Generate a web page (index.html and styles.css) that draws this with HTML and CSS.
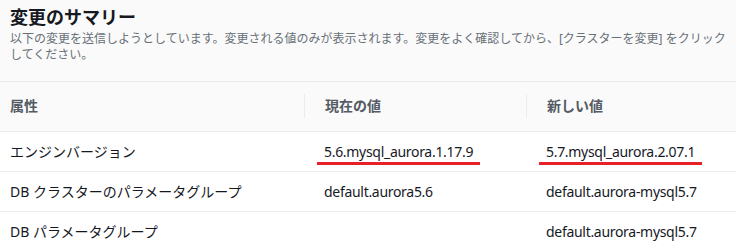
FILE: index.html
```html
<!DOCTYPE html>
<html lang="ja">
<head>
<meta charset="utf-8">
<link rel="stylesheet" href="styles.css">
</head>
<body>
<div class="summary">
  <div class="intro">
    <h2 class="title">変更のサマリー</h2>
    <p class="desc">以下の変更を送信しようとしています。変更される値のみが表示されます。変更をよく確認してから、[クラスターを変更] をクリックしてください。</p>
  </div>
  <table class="changes">
    <thead>
      <tr>
        <th class="c1"><div class="hcell first">属性</div></th>
        <th class="c2"><div class="hcell">現在の値</div></th>
        <th class="c3"><div class="hcell">新しい値</div></th>
      </tr>
    </thead>
    <tbody>
      <tr>
        <td class="c1">エンジンバージョン</td>
        <td class="c2"><span class="mark">5.6.mysql_aurora.1.17.9</span></td>
        <td class="c3"><span class="mark">5.7.mysql_aurora.2.07.1</span></td>
      </tr>
      <tr>
        <td class="c1">DB クラスターのパラメータグループ</td>
        <td class="c2">default.aurora5.6</td>
        <td class="c3">default.aurora-mysql5.7</td>
      </tr>
      <tr>
        <td class="c1">DB パラメータグループ</td>
        <td class="c2"></td>
        <td class="c3">default.aurora-mysql5.7</td>
      </tr>
    </tbody>
  </table>
</div>
</body>
</html>
```
FILE: styles.css
```css
html, body {
  margin: 0;
  padding: 0;
  background: #ffffff;
}
body {
  font-family: "Noto Sans", "Noto Sans CJK JP", sans-serif;
  color: #16191f;
}
.summary {
  width: 736px;
}
.intro {
  background: #fafafa;
  padding: 6px 10px 0 10px;
  height: 75px;
  border-bottom: 1px solid #eaeded;
}
.title {
  margin: 0;
  font-size: 18px;
  line-height: 22px;
  font-weight: 700;
  color: #16191f;
}
.desc {
  margin: 3px 0 0 0;
  font-size: 12px;
  line-height: 16px;
  color: #687078;
}
.changes {
  width: 736px;
  border-collapse: collapse;
  table-layout: fixed;
}
.c1 { width: 304px; }
.c2 { width: 222px; }
.c3 { width: 210px; }
th {
  background: #fafafa;
  padding: 12px 0 13px 0;
  text-align: left;
  font-size: 14px;
  font-weight: 700;
  color: #545b64;
  border-bottom: 1px solid #eaeded;
}
.hcell {
  height: 24px;
  line-height: 24px;
  padding-left: 20px;
  border-left: 1px solid #eaeded;
}
.hcell.first {
  padding-left: 10px;
  border-left: none;
}
td {
  height: 39px;
  padding: 0 0 0 20px;
  font-size: 14px;
  line-height: 20px;
  border-bottom: 1px solid #eaeded;
  vertical-align: middle;
}
td.c1 {
  padding-left: 10px;
}
td.c2, td.c3 {
  letter-spacing: -0.3px;
}
.mark {
  position: relative;
}
.mark::after {
  content: "";
  position: absolute;
  left: -7px;
  right: -7px;
  top: calc(100% + 1px);
  height: 3px;
  background: #e8202a;
}
```
